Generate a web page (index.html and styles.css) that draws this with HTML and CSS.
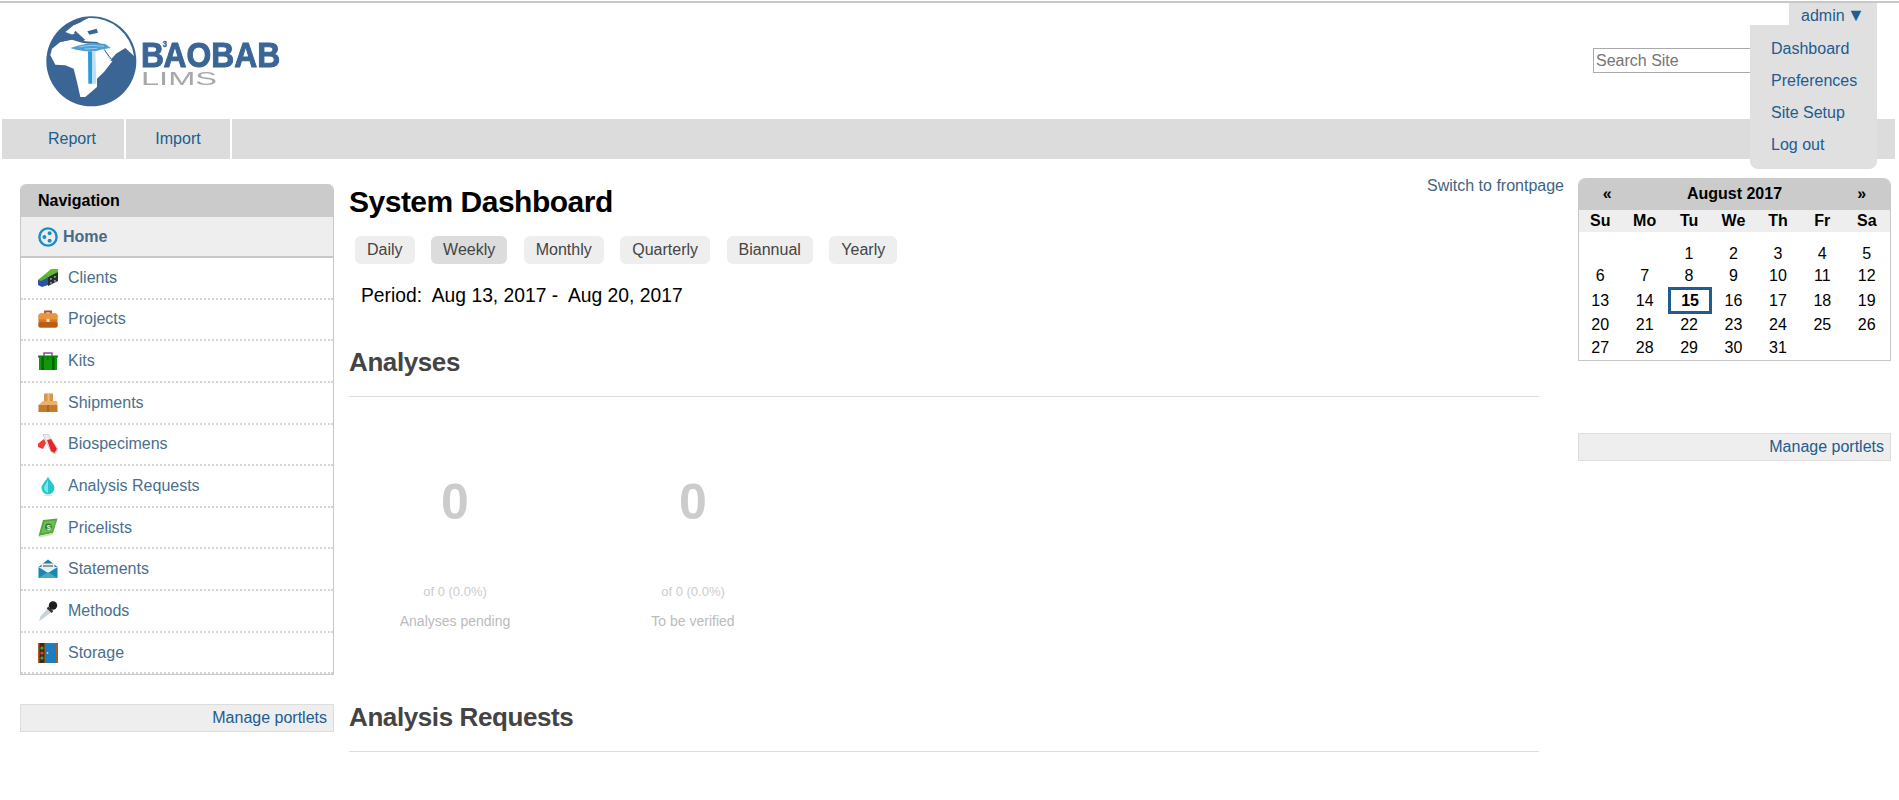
FILE: index.html
```html
<!DOCTYPE html>
<html lang="en">
<head>
  <meta charset="UTF-8">
  <title>Dashboard - Baobab LIMS</title>
  <link rel="stylesheet" href="styles.css">
</head>
<body>
<div class="page">

  <header class="site-header">
    <a class="logo" href="#">
      <svg class="logo-img" width="260" height="105" viewBox="0 0 780 315">
        <g transform="translate(36 6)">
          <circle cx="148" cy="148" r="135" fill="#3a6595"/>
          <!-- land -->
          <path d="M25 130 L30 110 L55 90 L90 83 L120 92 L175 100 L186 112 L205 145 L211 148 L186 180 L165 200 L165 225 L130 255 L115 255 L105 210 L95 170 L70 160 L40 158 Z" fill="#fff"/>
          <path d="M70 60 L95 40 L140 18 A131 131 0 0 1 276 132 L250 108 L222 125 L205 145 L186 112 L175 95 L120 88 L95 70 Z" fill="#fff"/>
          <!-- seas -->
          <path d="M60 80 L100 64 L118 78 L128 88 L165 90 L176 96 L120 90 L90 82 L55 90 Z" fill="#3a6595"/>
          <path d="M100 56 L130 84 L122 86 L96 62 Z M136 58 L164 50 L168 62 L142 68 Z M92 34 L122 24 L118 30 L98 38 Z" fill="#3a6595"/>
          <path d="M186 112 L208 142" stroke="#3a6595" stroke-width="3" fill="none"/>
          <!-- tree -->
          <path d="M85 108 L112 100 L150 92 L190 96 L206 108 L182 112 L160 118 L130 118 L102 113 Z" fill="#4f9fd2"/>
          <path d="M112 104 L150 100 L186 103 M128 111 L165 109" stroke="#bcdff3" stroke-width="2" fill="none"/>
          <path d="M138 118 L150 118 L150 215 L139 215 Z" fill="#2b9bd8"/>
          <path d="M150 118 L160 118 L163 215 L150 215 Z" fill="#bcdff3"/>
        </g>
        <g transform="translate(333 172) scale(.9 1)">
          <text class="logo-name">B<tspan class="logo-sup" dx="-4" dy="-60">3</tspan><tspan dx="-12" dy="60">AOBAB</tspan></text>
        </g>
        <text x="333" y="225" class="logo-sub" textLength="228" lengthAdjust="spacingAndGlyphs">LIMS</text>
      </svg>
    </a>
    <form class="search">
      <input class="search-input" type="text" placeholder="Search Site">
    </form>
    <div class="user-menu">
      <a class="user-toggle" href="#">admin <span class="caret">▼</span></a>
      <ul class="user-actions">
        <li><a href="#">Dashboard</a></li>
        <li><a href="#">Preferences</a></li>
        <li><a href="#">Site Setup</a></li>
        <li><a href="#">Log out</a></li>
      </ul>
    </div>
  </header>

  <nav class="main-nav">
    <a class="nav-report" href="#">Report</a>
    <a class="nav-import" href="#">Import</a>
    <span class="nav-fill"></span>
  </nav>

  <div class="columns">

    <aside class="col-left">
      <section class="portlet-nav">
        <h4 class="portlet-title">Navigation</h4>
        <a class="nav-home" href="#">
          <svg class="icon" viewBox="0 0 20 20"><circle cx="10" cy="10" r="8.6" fill="none" stroke="#1a8dc8" stroke-width="2.4"/><circle cx="6.4" cy="10" r="2" fill="#1a8dc8"/><circle cx="11.6" cy="6.2" r="2" fill="#1a8dc8"/><circle cx="11.6" cy="13.8" r="2" fill="#1a8dc8"/></svg>
          Home
        </a>
        <ul class="nav-list">
          <li><a href="#">
            <svg class="icon" viewBox="0 0 20 20"><path d="M6 7 L13 1 L20 1 L20 5 L12 9 Z" fill="#5cc02e"/><path d="M0 12 L6 9 L11 9 L10 17 L4 19 L0 17 Z" fill="#2f4fb0"/><path d="M0 12 L6 7 L11 7 L9 10 L3 13 Z" fill="#4fb52e"/><path d="M10 9 L20 4 L20 13 L10 18 Z" fill="#2a2f2a"/><path d="M12 10h1.8v1.8H12zM16 8h1.8v1.8H16zM12 14h1.8v1.8H12zM16 12h1.8v1.8H16z" fill="#8a9a9a"/></svg>
            Clients</a></li>
          <li><a href="#">
            <svg class="icon" viewBox="0 0 20 20"><path d="M7 5 V2.5 H13 V5" fill="none" stroke="#a8541a" stroke-width="1.8"/><rect x="0.5" y="4.5" width="19" height="14" rx="2" fill="#d9741f"/><rect x="0.5" y="4.5" width="19" height="6" rx="2" fill="#ec9440"/><rect x="0.5" y="13" width="19" height="5.5" rx="1.5" fill="#b85c17"/><rect x="8.5" y="10" width="3" height="3" fill="#f7e2c4"/></svg>
            Projects</a></li>
          <li><a href="#">
            <svg class="icon" viewBox="0 0 20 20"><path d="M6 5 V2 H14 V5" fill="none" stroke="#7a5a80" stroke-width="1.4"/><rect x="0" y="4.5" width="20" height="2" fill="#0d7d0d"/><rect x="1" y="6" width="18" height="13" fill="#0a9a0a"/><rect x="3.5" y="6" width="2.4" height="13" fill="#056305"/><rect x="14.1" y="6" width="2.4" height="13" fill="#056305"/><rect x="8.6" y="6.4" width="2.8" height="2.4" fill="#0d7d0d"/></svg>
            Kits</a></li>
          <li><a href="#">
            <svg class="icon" viewBox="0 0 20 20"><rect x="6" y="0.5" width="9" height="8" fill="#d9964a"/><rect x="9.5" y="0.5" width="2" height="8" fill="#f0bd7c"/><path d="M0.5 12 L5 8 H19 L19.5 12 Z" fill="#edb06a"/><rect x="0.5" y="12" width="19" height="7" fill="#c47b30"/><rect x="9.5" y="12" width="1" height="7" fill="#8e5517"/></svg>
            Shipments</a></li>
          <li><a href="#">
            <svg class="icon" viewBox="0 0 20 20"><path d="M5 0.5 L10 0 L20 15 L17 20 L13 18 Z" fill="#ececec" stroke="#b5b5b5" stroke-width=".6"/><path d="M9 6 L13 5 L19 15 L16.5 19 L13 17 Z" fill="#e3262b"/><path d="M2 8 L6 5 L8 9 L5 15 L0 13 L0 10 Z" fill="#ef3a33"/></svg>
            Biospecimens</a></li>
          <li><a href="#">
            <svg class="icon" viewBox="0 0 20 20"><path d="M10 0.5 C11 4 16.5 8 16.5 12 A6.5 6.5 0 0 1 3.5 12 C3.5 8 9 4 10 0.5 Z" fill="#27c5cc"/><path d="M10 3 C10 6 6 9 6 12 C6 14 8 16.5 10 17 Z" fill="#7fe6e8"/><ellipse cx="10" cy="19.2" rx="4.5" ry="0.8" fill="#d3dfe0"/></svg>
            Analysis Requests</a></li>
          <li><a href="#">
            <svg class="icon" viewBox="0 0 20 20"><path d="M5 2 L19.5 0.5 L15 15 L0.5 18 Z" fill="#4fa83a"/><path d="M0.5 18 L15 15 L14.5 17 L1.5 19.5 Z" fill="#cfe3c0"/><path d="M6.5 3.5 L18 2.5 L14 13.5 L3 15.5 Z" fill="#6fbb55"/><circle cx="10.5" cy="9" r="3.4" fill="#2f7a23"/><text x="8.6" y="11.8" class="icon-dollar">$</text></svg>
            Pricelists</a></li>
          <li><a href="#">
            <svg class="icon" viewBox="0 0 20 20"><path d="M0.5 8 L10 0.5 L19.5 8 Z" fill="#1f7ca0"/><rect x="3.5" y="4.5" width="13" height="8" fill="#e6eef0"/><rect x="5" y="6" width="10" height="2" fill="#8d9ba2"/><path d="M0.5 8 L10 14 L19.5 8 V19 H0.5 Z" fill="#1687ad"/><path d="M0.5 19 L10 13 L19.5 19 Z" fill="#46a9c8"/></svg>
            Statements</a></li>
          <li><a href="#">
            <svg class="icon" viewBox="0 0 20 20"><path d="M10 7 L14 10.5 L5 17.5 L1 20 L2.5 15.5 Z" fill="#c7d3d9"/><path d="M9.5 6.5 L14.5 11" stroke="#333" stroke-width="2.4"/><circle cx="15" cy="4.5" r="4.2" fill="#1f1f1f"/></svg>
            Methods</a></li>
          <li><a href="#">
            <svg class="icon" viewBox="0 0 20 20"><rect width="20" height="20" fill="#a85c2c"/><rect x="1.5" y="0" width="5" height="20" fill="#46290f"/><circle cx="4" cy="5" r="1.6" fill="#2db52d"/><circle cx="4" cy="10" r="1.6" fill="#e04242"/><circle cx="4" cy="15" r="1.6" fill="#2db52d"/><rect x="7" y="1" width="11" height="19" fill="#1e7cc2"/><circle cx="9.5" cy="10" r=".9" fill="#dce85a"/></svg>
            Storage</a></li>
        </ul>
      </section>
      <div class="manage-portlets manage-left"><a href="#">Manage portlets</a></div>
    </aside>

    <main class="col-center">
      <a class="switch-link" href="#">Switch to frontpage</a>
      <h1 class="page-title">System Dashboard</h1>
      <div class="period-tabs">
        <a class="tab" href="#">Daily</a>
        <a class="tab tab-active" href="#">Weekly</a>
        <a class="tab" href="#">Monthly</a>
        <a class="tab" href="#">Quarterly</a>
        <a class="tab" href="#">Biannual</a>
        <a class="tab" href="#">Yearly</a>
      </div>
      <p class="period">Period:&nbsp; Aug 13, 2017 -&nbsp; Aug 20, 2017</p>

      <h2 class="section-title">Analyses</h2>
      <div class="stats">
        <div class="stat">
          <div class="stat-number">0</div>
          <div class="stat-total">of 0 (0.0%)</div>
          <div class="stat-label">Analyses pending</div>
        </div>
        <div class="stat">
          <div class="stat-number">0</div>
          <div class="stat-total">of 0 (0.0%)</div>
          <div class="stat-label">To be verified</div>
        </div>
      </div>

      <h2 class="section-title">Analysis Requests</h2>
    </main>

    <aside class="col-right">
      <table class="calendar">
        <thead>
          <tr class="cal-head"><th class="cal-prev"><a href="#">«</a></th><th colspan="5">August 2017</th><th class="cal-next"><a href="#">»</a></th></tr>
          <tr class="cal-days"><th>Su</th><th>Mo</th><th>Tu</th><th>We</th><th>Th</th><th>Fr</th><th>Sa</th></tr>
        </thead>
        <tbody>
          <tr><td></td><td></td><td>1</td><td>2</td><td>3</td><td>4</td><td>5</td></tr>
          <tr><td>6</td><td>7</td><td>8</td><td>9</td><td>10</td><td>11</td><td>12</td></tr>
          <tr class="cal-row-today"><td>13</td><td>14</td><td class="today">15</td><td>16</td><td>17</td><td>18</td><td>19</td></tr>
          <tr><td>20</td><td>21</td><td>22</td><td>23</td><td>24</td><td>25</td><td>26</td></tr>
          <tr class="cal-row-last"><td>27</td><td>28</td><td>29</td><td>30</td><td>31</td><td></td><td></td></tr>
        </tbody>
      </table>
      <div class="manage-portlets manage-right"><a href="#">Manage portlets</a></div>
    </aside>

  </div>
</div>
</body>
</html>
```

FILE: styles.css
```css
html, body {
  margin: 0;
  padding: 0;
  background: #fff;
}
body {
  font-family: "Liberation Sans", Arial, sans-serif;
  font-size: 16px;
  color: #000;
  overflow: hidden;
}
a {
  color: #205c90;
  text-decoration: none;
}
ul {
  list-style: none;
  margin: 0;
  padding: 0;
}

.page {
  border-top: 2px solid #c8c8c8;
  margin-top: 1px;
  padding: 0 4px 0 2px;
}

/* header */
.site-header {
  position: relative;
  height: 116px;
}
.logo {
  display: block;
  width: 260px;
  height: 105px;
  margin-left: 28px;
  padding-top: 7px;
}
.logo-img {
  filter: blur(0.4px);
}
.logo-name {
  font-family: "Liberation Sans", Arial, sans-serif;
  font-weight: bold;
  font-size: 106px;
  fill: #3a6595;
  stroke: #3a6595;
  stroke-width: 3px;
}
.logo-sup {
  font-size: 26px;
  stroke-width: 1px;
}
.logo-sub {
  font-family: "Liberation Sans", Arial, sans-serif;
  font-size: 54px;
  fill: #a8a8a8;
}
.search {
  position: absolute;
  left: 1591px;
  top: 45px;
  margin: 0;
}
.search-input {
  width: 200px;
  height: 25px;
  box-sizing: border-box;
  border: 1px solid #aaa;
  padding: 0 2px;
  font: 16px "Liberation Sans", Arial, sans-serif;
  display: block;
}
.search-input::placeholder {
  color: #757575;
  opacity: 1;
}
.user-menu {
  position: absolute;
  right: 18px;
  top: 0;
  width: 127px;
  z-index: 5;
}
.user-toggle {
  display: block;
  margin-left: 39px;
  height: 22px;
  line-height: 26px;
  padding-left: 12px;
  background: #e0e0e0;
  white-space: nowrap;
  overflow: hidden;
}
.caret {
  font-size: 18px;
  line-height: 18px;
  margin-left: -2px;
}
.user-actions {
  background: #e0e0e0;
  border-radius: 0 0 8px 8px;
  padding: 8px 0 8px 21px;
  height: 128px;
}
.user-actions li {
  height: 32px;
  line-height: 32px;
}

/* main nav */
.main-nav {
  display: flex;
  height: 40px;
  gap: 2px;
}
.main-nav a {
  background: #dcdcdc;
  line-height: 40px;
}
.nav-report {
  width: 122px;
  box-sizing: border-box;
  padding-left: 46px;
}
.nav-import {
  width: 104px;
  text-align: center;
}
.nav-fill {
  flex: 1;
  background: #dcdcdc;
}

/* columns */
.columns {
  display: flex;
  align-items: flex-start;
  padding: 25px 0 0 18px;
}
.col-left {
  width: 314px;
}
.col-center {
  position: relative;
  width: 1215px;
  margin-left: 15px;
}
.col-right {
  width: 313px;
  margin-left: 14px;
  margin-top: -6px;
}

/* navigation portlet */
.portlet-nav {
  border: 1px solid #c8c8c8;
  border-top: 0;
  border-radius: 6px 6px 0 0;
  height: 491px;
  box-sizing: border-box;
  overflow: hidden;
}
.portlet-title {
  margin: 0;
  height: 33px;
  line-height: 34px;
  padding-left: 17px;
  background: #cbcbcb;
  font-size: 16px;
}
.nav-home {
  display: flex;
  align-items: center;
  gap: 5px;
  height: 39px;
  padding-left: 17px;
  background: #eee;
  border-bottom: 2px solid #c8c8c8;
  font-weight: bold;
  color: #466b85;
}
.icon {
  width: 20px;
  height: 20px;
  flex: none;
}
.icon-dollar {
  font-size: 8px;
  font-weight: bold;
  fill: #d8f0c8;
  font-family: "Liberation Sans", Arial, sans-serif;
}
.nav-list li {
  height: 41.65px;
  box-sizing: border-box;
  border-bottom: 2px dotted #d6d6d6;
}
.nav-list a {
  display: flex;
  align-items: center;
  gap: 10px;
  height: 100%;
  padding-left: 17px;
  color: #4a6f8c;
}

.manage-portlets {
  height: 28px;
  line-height: 25px;
  box-sizing: border-box;
  padding-right: 6px;
  text-align: right;
  background: #eee;
  border: 1px solid #ddd;
}
.manage-left {
  margin-top: 29px;
}
.manage-right {
  margin-top: 72px;
}

/* dashboard */
.switch-link {
  position: absolute;
  right: 0;
  top: -7px;
  line-height: 18px;
  color: #3f6482;
}
.page-title {
  margin: 0;
  padding-top: 0;
  font-size: 30px;
  line-height: 36px;
  letter-spacing: -0.5px;
}
.period-tabs {
  display: flex;
  gap: 16.5px;
  margin: 16px 0 0 6px;
}
.tab {
  background: #eee;
  color: #444;
  height: 28px;
  line-height: 28px;
  padding: 0 12px;
  border-radius: 6px;
}
.tab-active {
  background: #dcdcdc;
}
.period {
  margin: 21px 0 0 12px;
  font-size: 19.3px;
  line-height: 22px;
}
.section-title {
  margin: 40px 25px 0 0;
  padding-bottom: 19px;
  border-bottom: 1px solid #ddd;
  font-size: 26px;
  line-height: 30px;
  letter-spacing: -0.4px;
  color: #444;
}
.stats {
  display: grid;
  grid-template-columns: 212px 212px;
  gap: 26px;
  height: 291px;
  margin-bottom: -26px;
}
.stat {
  text-align: center;
}
.stat-number {
  margin-top: 77px;
  font-size: 50px;
  font-weight: bold;
  line-height: 56px;
  color: #ccc;
}
.stat-total {
  margin-top: 55px;
  font-size: 13px;
  line-height: 14px;
  color: #ccc;
}
.stat-label {
  margin-top: 14px;
  font-size: 14px;
  line-height: 16px;
  color: #bbb;
}

/* calendar */
.calendar {
  width: 313px;
  table-layout: fixed;
  border-collapse: separate;
  border-spacing: 0;
  text-align: center;
  border: 1px solid #c8c8c8;
  border-top: 0;
  border-radius: 7px 7px 0 0;
  font-size: 16px;
}
.cal-head th {
  height: 32px;
  background: #cbcbcb;
  font-size: 16px;
  padding: 0;
}
.cal-head .cal-prev {
  border-top-left-radius: 7px;
  padding-left: 12px;
}
.cal-head .cal-next {
  border-top-right-radius: 7px;
  padding-right: 12px;
}
.cal-head a {
  color: #000;
}
.cal-days th {
  height: 22px;
  background: #eee;
  padding: 0 2px 0 0;
}
.calendar td {
  height: 22px;
  padding: 0 2px 0 0;
}
.calendar tbody tr:first-child td {
  height: 33px;
  vertical-align: bottom;
  line-height: 22px;
}
.cal-row-today td {
  height: 27px;
}
.calendar .cal-row-last td {
  height: 24px;
  vertical-align: top;
  line-height: 24px;
}
.calendar td.today {
  box-sizing: border-box;
  padding: 0;
  border: 3px solid #205c90;
  font-weight: bold;
}
```
